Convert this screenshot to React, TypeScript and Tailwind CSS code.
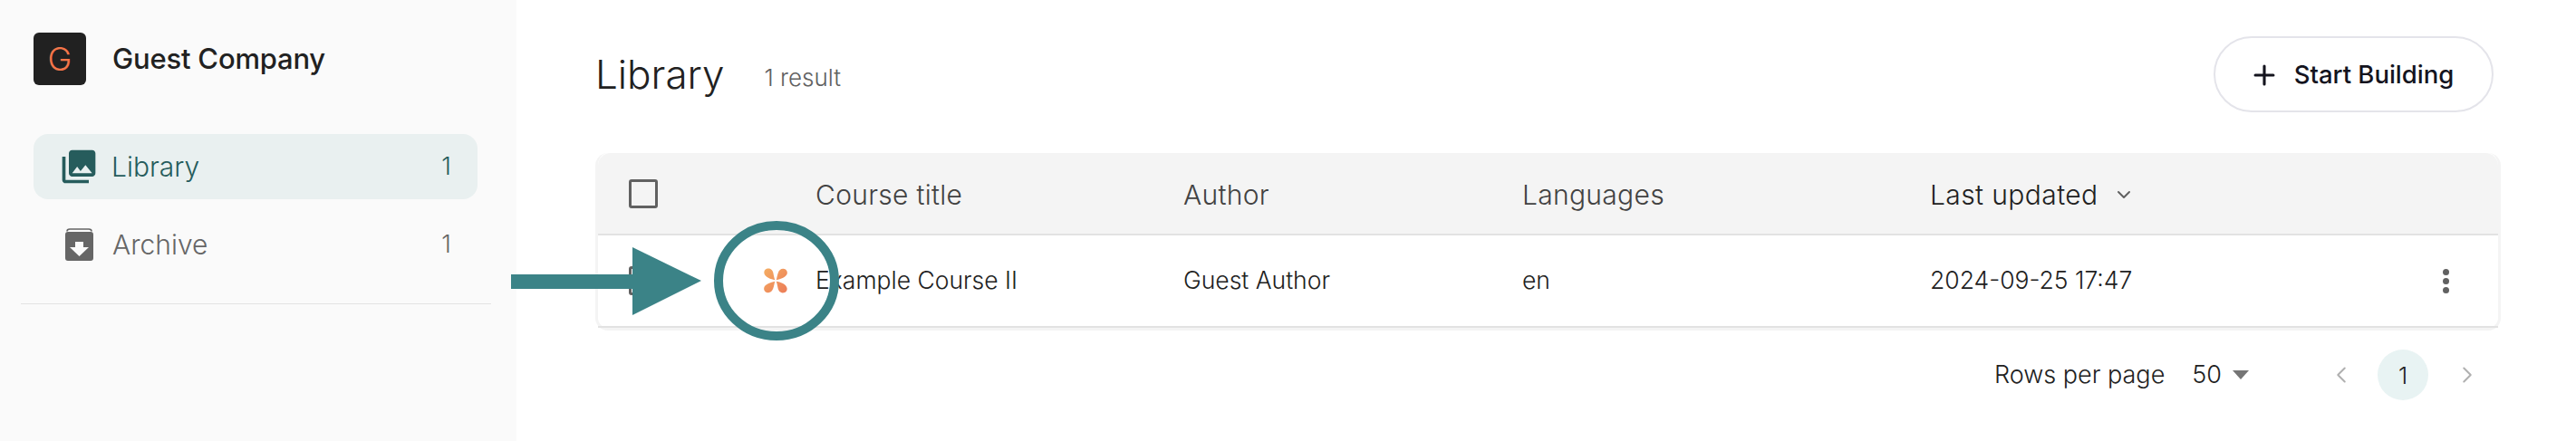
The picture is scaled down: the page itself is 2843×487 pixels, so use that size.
import { ChevronDown, ChevronLeft, ChevronRight, Plus } from "lucide-react";
import { MdPhotoLibrary } from "react-icons/md";

function ArchiveIcon() {
  return (
    <svg width="33" height="37" viewBox="0 0 33 37" className="shrink-0">
      <path d="M3 3.5Q3 1 6 1H27Q30 1 30 3.5" fill="none" stroke="#666666" strokeWidth="1.6" />
      <rect x="1" y="4" width="31" height="32" rx="3" fill="#666666" />
      <path d="M12 15H21V21H27L16.5 31L6 21H12Z" fill="#fafafa" />
    </svg>
  );
}

function CourseLogo() {
  return (
    <svg width="28" height="28" viewBox="0 0 28 28">
      <defs>
        <linearGradient id="petal" x1="0" y1="0" x2="1" y2="1">
          <stop offset="0" stopColor="#f4ad62" />
          <stop offset="1" stopColor="#ec7c58" />
        </linearGradient>
      </defs>
      <path
        fill="url(#petal)"
        d="M13.2 13.2C9 12.6 2 10 1.400 5.800C1 2.400 3.400 0.600 6 0.600C9.400 0.600 11 3 11.600 6.400C12 8.800 12.600 11 13.2 13.2ZM14.800 13.200C15.400 10.600 15.800 8 16.800 5.200C17.800 2.400 19.800 0.600 22.600 0.800C25.400 1 27.200 3.400 26.800 6C26.200 9.800 19.400 12.400 14.800 13.200ZM13.200 14.800C12.600 17.400 12.200 20 11.200 22.800C10.200 25.600 8.200 27.400 5.400 27.200C2.600 27 0.800 24.600 1.200 22C1.800 18.200 8.600 15.600 13.200 14.800ZM14.800 14.800C19 15.400 26 18 26.600 22.200C27 25.600 24.600 27.400 22 27.400C18.600 27.400 17 25 16.400 21.600C16 19.200 15.400 17 14.800 14.800Z"
      />
    </svg>
  );
}

function Checkbox() {
  return <span className="block h-[32px] w-[32px] rounded-[3px] border-[3px] border-[#616161]" />;
}

export default function App() {
  return (
    <div className="relative flex h-[487px] w-[2843px] overflow-hidden bg-white font-['Inter',sans-serif] text-[#212121]">
      <aside className="w-[570px] shrink-0 bg-[#fafafa] pt-[36px]">
        <div className="flex items-center pl-[37px]">
          <span className="flex h-[58px] w-[58px] items-center justify-center rounded-[6px] bg-[#212121] text-[36px] font-light text-[#f4764a]">G</span>
          <span className="ml-[29px] text-[31px] font-medium tracking-[-0.2px] text-[#212121]">Guest Company</span>
        </div>
        <nav className="mt-[54px] flex flex-col gap-[14px] pl-[37px] pr-[43px]">
          <a className="flex h-[72px] items-center rounded-[16px] bg-[#e9f0f0] pl-[32px] pr-[29px] text-[#265c5c]">
            <MdPhotoLibrary size={44} className="-ml-[4px] -mr-[4px] shrink-0" />
            <span className="ml-[18px] flex-1 text-[30px] font-light">Library</span>
            <span className="text-[27px] font-light">1</span>
          </a>
          <a className="flex h-[72px] items-center pl-[34px] pr-[29px] text-[#666666]">
            <ArchiveIcon />
            <span className="ml-[20px] flex-1 text-[30px] font-light">Archive</span>
            <span className="text-[27px] font-light">1</span>
          </a>
        </nav>
        <div className="ml-[23px] mr-[28px] mt-[29px] border-t border-[#e3e3e3]" />
      </aside>

      <main className="flex-1 pl-[87px] pr-[83px] pt-[40px]">
        <div className="flex h-[84px] items-center pr-[8px]">
          <h1 className="text-[44px] font-light text-[#212121]">Library</h1>
          <span className="ml-[44px] mt-[6px] text-[26px] font-light text-[#616161]">1 result</span>
          <button className="ml-auto flex h-[84px] w-[309px] items-center justify-center gap-[16px] rounded-[42px] border-2 border-[#e4e4ea] bg-white pr-[5px] pt-[1px] text-[27.500px] font-medium text-[#14141e]">
            <Plus size={34} strokeWidth={2.2} />
            Start Building
          </button>
        </div>

        <div className="mt-[45px] rounded-[14px] border-[3px] border-t-0 border-[#f4f4f4] bg-white">
          <div className="grid h-[91px] grid-cols-[240px_406px_374px_450px_1fr] items-center rounded-t-[14px] border-b-2 border-[#e2e2e2] bg-[#f4f4f4] pt-[3px] text-[30px] font-light tracking-[0.3px] text-[#424242]">
            <div className="-mt-[3px] pl-[34px]"><Checkbox /></div>
            <div>Course title</div>
            <div>Author</div>
            <div>Languages</div>
            <div className="flex items-center gap-[16px] tracking-[0.4px] text-[#212121]">
              Last updated
              <ChevronDown size={24} className="text-[#616161]" />
            </div>
          </div>
          <div className="grid h-[102px] grid-cols-[240px_406px_374px_450px_1fr] items-center border-b-2 border-[#e2e2e2] text-[26.500px] font-light text-[#212121]">
            <div className="flex items-center justify-between pl-[34px] pr-[30px]">
              <Checkbox />
              <CourseLogo />
            </div>
            <div>Example Course II</div>
            <div>Guest Author</div>
            <div>en</div>
            <div className="flex items-center justify-between pr-[54px]">
              2024-09-25 17:47
              <span className="flex flex-col gap-[3px]">
                <span className="h-[7px] w-[7px] rounded-full bg-[#616161]" />
                <span className="h-[7px] w-[7px] rounded-full bg-[#616161]" />
                <span className="h-[7px] w-[7px] rounded-full bg-[#616161]" />
              </span>
            </div>
          </div>
        </div>

        <div className="mt-[21px] flex h-[56px] items-center justify-end pr-[22px] text-[27px] font-light text-[#212121]">
          <span>Rows per page</span>
          <span className="ml-[30px]">50</span>
          <span className="ml-[12px] h-0 w-0 border-x-[9px] border-t-[10px] border-x-transparent border-t-[#757575]" />
          <ChevronLeft size={30} strokeWidth={1.6} className="ml-[87px] text-[#b0b0b0]" />
          <span className="ml-[25px] flex h-[56px] w-[56px] items-center justify-center rounded-full bg-[#e8f3f3] text-[26px]">1</span>
          <ChevronRight size={30} strokeWidth={1.6} className="ml-[28px] text-[#b0b0b0]" />
        </div>
      </main>

      {/* annotation drawn over the screenshot */}
      <svg width="380" height="140" viewBox="0 0 380 140" className="absolute left-[560px] top-[240px]">
        <rect x="4" y="63" width="140" height="16" fill="#3b8387" />
        <path d="M138 33L214 70L138 108Z" fill="#3b8387" />
        <ellipse cx="297" cy="70" rx="64" ry="61" fill="none" stroke="#3b8387" strokeWidth="10" />
      </svg>
    </div>
  );
}
